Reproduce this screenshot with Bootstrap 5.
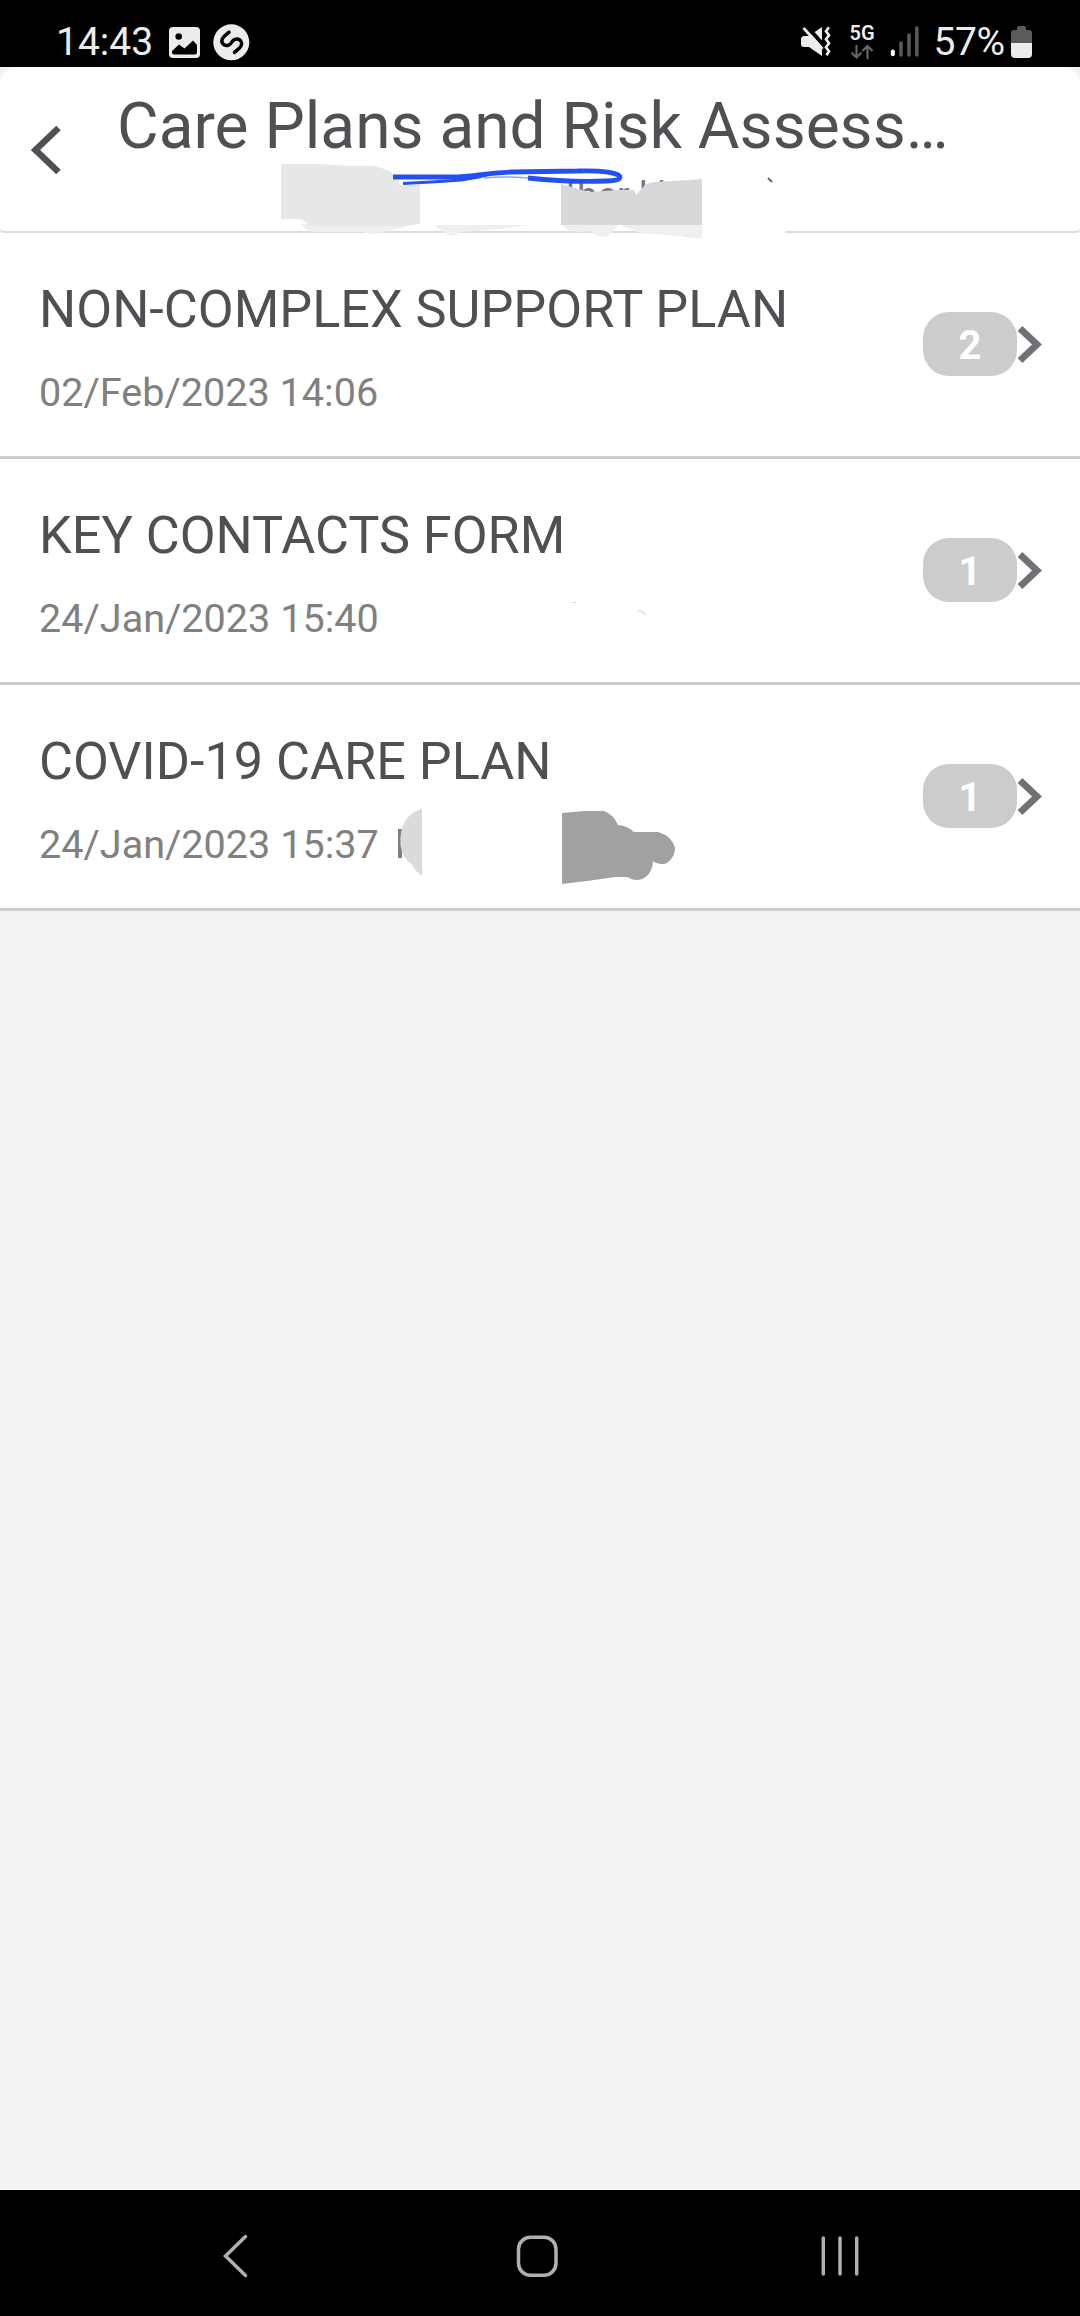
<!DOCTYPE html>
<html lang="en">
<head>
<meta charset="utf-8">
<meta name="viewport" content="width=device-width, initial-scale=1">
<title>Care Plans and Risk Assessments</title>
<link href="https://cdn.jsdelivr.net/npm/bootstrap@5.3.0/dist/css/bootstrap.min.css" rel="stylesheet">
<style>
  body { font-family: Roboto, "Liberation Sans", sans-serif; background: #f2f3f5; color: #4f5054; height: 2316px; }
  svg { display: block; flex: none; }
  .statusbar { height: 67px; background: #000; color: #ececec; font-size: 39px; line-height: 46px; padding: 19px 45px 0 56px; }
  .statusbar svg { margin-top: -1px; }
  .left-icons { margin-left: 14px; }
  .net-col { width: 54px; }
  .net { font-size: 20px; font-weight: 600; line-height: 22px; margin-top: 3px; }
  .net-col svg { margin-top: 1px; }
  .signal { margin-right: 2px; }
  .battery-text { width: 80px; text-align: center; letter-spacing: -.5px; }
  .appbar { height: 166px; background: #fff; border-radius: 18px 18px 5px 5px; border-bottom: 2px solid #d9dcde; z-index: 2; }
  .back { padding: 56px 0 0 30px; width: 117px; }
  .page-title { font-size: 64px; line-height: 76px; padding-top: 22px; font-weight: 400; }
  .person { left: 565px; top: 107px; font-size: 37px; line-height: 44px; color: #77787b; white-space: pre; }
  .marks { left: 0; top: 0; pointer-events: none; }
  .plan { height: 226px; border: 0; border-bottom: 3px solid #ccc !important; border-radius: 0 !important; padding: 0 38px 0 39px; color: inherit; background: #fff; }
  .plan-name { font-size: 52.2px; line-height: 62px; padding-top: 46px; font-weight: 400; }
  .plan-date { font-size: 39.6px; line-height: 47px; padding-top: 28px; color: #808080; }
  .count { width: 94px; height: 64px; border-radius: 26px; background: #ccc; color: #fff; font-size: 40px; font-weight: 700; line-height: 68px; margin-bottom: 1px; }
  .navkeys { height: 126px; background: #000; }
</style>
</head>
<body class="d-flex flex-column m-0 overflow-hidden">
  <div class="statusbar d-flex justify-content-between">
    <div class="d-flex">
      <span>14:43</span>
      <svg class="left-icons" width="84" height="46" viewBox="167 18 84 46">
        <rect x="169" y="27" width="31" height="31" rx="4" fill="#ececec"/>
        <circle cx="178.700" cy="36.500" r="3.300" fill="#000"/>
        <path d="M172 51l7-6.500 5.500 4 8.500-8 4 4.500v7.500q0 2-2 2h-21q-2 0-2-2z" fill="#000"/>
        <circle cx="231.300" cy="42.300" r="18" fill="#ececec"/>
        <path d="M229 32.200l-5 4.300c-3 3-2.800 6.500 0 8.300 3 1.900 6.500-.2 8-2.800M234.500 52.300l5-4.300c3-3 2.800-6.500 0-8.300-3-1.900-6.500 .2-8 2.800" fill="none" stroke="#000" stroke-width="3.500" stroke-linecap="round"/>
      </svg>
    </div>
    <div class="d-flex">
      <svg width="35" height="46" viewBox="800 18 35 46">
        <path d="M801 38l2-2h6l13-9v29l-13-9h-5q-3 0-3-3z" fill="#ececec"/>
        <path d="M804 23l22 25" stroke="#000" stroke-width="4"/>
        <path d="M803.500 28l19 21" stroke="#ececec" stroke-width="2.800"/>
        <path d="M829.500 27.500l-3 4 3 4-3 4 3 4-3 4 3 4-2.500 4" transform="translate(-.5 -.3)" fill="none" stroke="#ececec" stroke-width="2.700"/>
      </svg>
      <div class="net-col d-flex flex-column align-items-center">
        <span class="net">5G</span>
        <svg width="24" height="14" viewBox="0 0 24 14"><path d="M6.500 0v11.500M1.500 7.500l5 5 5-5M17.500 14V1.500M12.500 6l5-5 5 5" fill="none" stroke="#666" stroke-width="2.200"/></svg>
      </div>
      <svg class="signal" width="38" height="46" viewBox="888 18 38 46">
        <path d="M891.800 51.500v2.800" stroke="#fff" stroke-width="4" stroke-linecap="round"/>
        <path d="M900 43v12M908 35v20M915.800 28v27" stroke="#595959" stroke-width="3.600" stroke-linecap="round"/>
      </svg>
      <span class="battery-text">57%</span>
      <svg width="26" height="46" viewBox="1009 18 26 46">
        <path d="M1011 43V33q0-3 3-3h3v-2q0-2 2-2h5q2 0 2 2v2h3q3 0 3 3v10z" fill="#5b5b5b"/>
        <path d="M1011 43h21v11q0 4-4 4h-13q-4 0-4-4z" fill="#ececec"/>
      </svg>
    </div>
  </div>

  <header class="appbar position-relative d-flex">
    <div class="back">
      <svg width="34" height="54" viewBox="30 123 34 54"><path d="M58.500 128L35.500 150l23 22" fill="none" stroke="#4f5054" stroke-width="6.500"/></svg>
    </div>
    <h1 class="page-title m-0 text-nowrap">Care Plans and Risk Assess…</h1>
    <span class="person position-absolute">ther l l</span>
    <svg class="marks position-absolute" width="1080" height="175" viewBox="0 67 1080 175">
      <path d="M702 228h80l4 2-2 5h-82z" fill="#fff"/>
      <path d="M300 224h115l-15 4-20 5-10 1-8-2h-45q-8 0-12-4z" fill="#efefef"/>
      <path d="M281 164h39l28 2h26q14 3 21 9l5 10h20v38q-3 3-25 3h-86q-3-5-8-7h-20z" fill="#e6e7e8"/>
      <path d="M435 225h95l-40 5-28 2-10 4q-10-3-17-11z" fill="#efefef"/>
      <path d="M561 225h141v13q-8 1-22-2l-25-2q-18 0-37-10-5 9-12 13-8 0-16-6l-8 1-10-1q-8-2-11-8z" fill="#efefef"/>
      <path d="M561 184l17 5 12 3 28-2h16l2 5 9-10q5-3 10-3l35-2 12-1v46H561z" fill="#d7d8da"/>
      <g fill="none" stroke="#2450f0">
        <path d="M393 177h59c22 0 30-4 60-5l65-1c25-1 43 2 43 6 0 3-6 4-14 4-24 1-50 0-78-3" stroke-width="4.800"/>
        <path d="M403 183.500l28-1.500 30-2 18-3 14-4" stroke-width="3.200"/>
        <path d="M484 178q20-2 44 0" stroke="#8fa5f8" stroke-width="1.600"/>
      </g>
      <path d="M768 178l4 4" stroke="#666" stroke-width="2"/>
    </svg>
  </header>

  <main class="list-group list-group-flush rounded-0 flex-grow-1">
    <a href="#" class="plan list-group-item list-group-item-action d-flex justify-content-between">
      <div>
        <h2 class="plan-name m-0">NON-COMPLEX SUPPORT PLAN</h2>
        <div class="plan-date">02/Feb/2023 14:06</div>
      </div>
      <div class="d-flex align-items-center">
        <span class="count text-center">2</span>
        <svg width="25" height="40" viewBox="1017 325 25 40"><path d="M1020 328.500L1037 344.500l-17 16" fill="none" stroke="#707174" stroke-width="6.800"/></svg>
      </div>
    </a>
    <a href="#" class="plan list-group-item list-group-item-action d-flex justify-content-between position-relative">
      <div>
        <h2 class="plan-name m-0">KEY CONTACTS FORM</h2>
        <div class="plan-date">24/Jan/2023 15:40</div>
      </div>
      <svg class="position-absolute top-0 start-0" width="700" height="223" viewBox="0 459 700 223"><path d="M572 602.500h4M638 610.500l4 1 3 3" fill="none" stroke="#d5d5d5" stroke-width="1.200"/></svg>
      <div class="d-flex align-items-center">
        <span class="count text-center">1</span>
        <svg width="25" height="40" viewBox="1017 325 25 40"><path d="M1020 328.500L1037 344.500l-17 16" fill="none" stroke="#707174" stroke-width="6.800"/></svg>
      </div>
    </a>
    <a href="#" class="plan list-group-item list-group-item-action d-flex justify-content-between position-relative">
      <div>
        <h2 class="plan-name m-0">COVID-19 CARE PLAN</h2>
        <div class="plan-date">24/Jan/2023 15:37</div>
      </div>
      <svg class="position-absolute top-0 start-0" width="700" height="223" viewBox="0 685 700 223">
        <path d="M398 829h4v29h-4z" fill="#808080"/>
        <path d="M422 808.500v67q-6-3-10-11-10-7-11.500-19-1-16 5-25 6-9 16.500-12z" fill="#dadada"/>
        <path d="M562 813l23-2h19q10 4 14 14 10 1 16 7h24q14 4 17 16c0 8-6 16-12 16-5 0-7-1-10-3 0 9-6 19-16 19-7 0-8-3-10-3h-12l-28 4-25 3z" fill="#a1a1a3"/>
      </svg>
      <div class="d-flex align-items-center">
        <span class="count text-center">1</span>
        <svg width="25" height="40" viewBox="1017 325 25 40"><path d="M1020 328.500L1037 344.500l-17 16" fill="none" stroke="#707174" stroke-width="6.800"/></svg>
      </div>
    </a>
  </main>

  <footer class="navkeys">
    <svg width="1080" height="126" viewBox="0 2190 1080 126" fill="none" stroke="#b0b0b0" stroke-width="3.500" stroke-linecap="round">
      <path d="M245.500 2236.500L225.500 2256l20 19.500"/>
      <rect x="518.500" y="2237.300" width="37.500" height="38" rx="12"/>
      <path d="M823.300 2238v36M840 2238v36M856.700 2238v36"/>
    </svg>
  </footer>
<script src="https://cdn.jsdelivr.net/npm/bootstrap@5.3.0/dist/js/bootstrap.bundle.min.js"></script>
</body>
</html>
